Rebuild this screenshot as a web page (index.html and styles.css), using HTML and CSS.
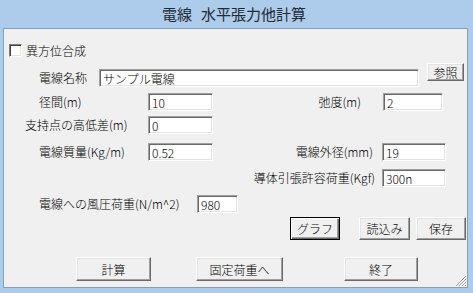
FILE: index.html
```html
<!DOCTYPE html>
<html lang="ja">

<head>
  <meta charset="UTF-8">
  <title>電線 水平張力他計算</title>
  <link rel="stylesheet" href="styles.css">
</head>

<body>
  <div class="window">
    <div class="titlebar"><span>電線</span><span class="title-main">水平張力他計算</span></div>

    <div class="panel">
      <div class="row row-check">
        <span class="check"></span>
        <span class="check-label">異方位合成</span>
      </div>

      <div class="row row-name">
        <span class="lbl lbl-name">電線名称</span>
        <input class="txt txt-name" type="text" value="サンプル電線">
        <button class="btn btn-ref">参照</button>
      </div>

      <div class="row row-span">
        <span class="lbl lbl-a">径間(m)</span>
        <input class="txt txt-a" type="text" value="10">
        <span class="lbl lbl-sag">弛度(m)</span>
        <input class="txt txt-sag" type="text" value="2">
      </div>

      <div class="row row-diff">
        <span class="lbl lbl-diff">支持点の高低差(m)</span>
        <input class="txt txt-a" type="text" value="0">
      </div>

      <div class="row row-mass">
        <span class="lbl lbl-a">電線質量(Kg/m)</span>
        <input class="txt txt-a" type="text" value="0.52">
        <span class="lbl lbl-dia">電線外径(mm)</span>
        <input class="txt txt-b" type="text" value="19">
      </div>

      <div class="row row-tension">
        <span class="lbl lbl-tension">導体引張許容荷重(Kgf)</span>
        <input class="txt txt-b" type="text" value="300n">
      </div>

      <div class="row row-wind">
        <span class="lbl lbl-wind">電線への風圧荷重(N/m^2)</span>
        <input class="txt txt-wind" type="text" value="980">
      </div>

      <div class="row row-btn1">
        <button class="btn btn-default btn-graph">グラフ</button>
        <button class="btn btn-load">読込み</button>
        <button class="btn btn-save">保存</button>
      </div>

      <div class="row row-btn2">
        <button class="btn btn-calc">計算</button>
        <button class="btn btn-fixed">固定荷重へ</button>
        <button class="btn btn-end">終了</button>
      </div>

      <svg class="grip" width="12" height="12" viewBox="0 0 12 12">
        <path d="M11 1 L1 11 M11 4 L4 11 M11 7 L7 11 M11 10 L10 11" stroke="#a0a0a0" stroke-width="1" />
        <path d="M11 2 L2 11 M11 5 L5 11 M11 8 L8 11" stroke="#fff" stroke-width="1" />
      </svg>
    </div>
  </div>
</body>

</html>
```

FILE: styles.css
```css
* {
  margin: 0;
  padding: 0;
  box-sizing: border-box;
}

body {
  background-color: #adcbea;
  font-family: "Noto Sans CJK JP", "Noto Sans", sans-serif;
  font-size: 12px;
  font-weight: 300;
  color: #000;
}

.window {
  width: 473px;
  height: 293px;
  background-color: #adcbea;
}

.titlebar {
  display: flex;
  justify-content: center;
  height: 28px;
  line-height: 28px;
  font-size: 15px;
  font-weight: 400;
  color: #1e2a36;
  padding-right: 5px;
}

.title-main {
  margin-left: 9px;
}

.panel {
  position: relative;
  width: 465px;
  height: 260px;
  margin-left: 3px;
  background-color: #f0f0f0;
  border: 1px solid #8a9db3;
}

.row {
  display: flex;
  align-items: center;
  height: 18px;
  white-space: nowrap;
}

.lbl {
  line-height: 18px;
}

/* 行の縦位置 */
.row-check {
  height: 13px;
  margin-top: 15px;
}

.row-name {
  margin-top: 12px;
  align-items: flex-start;
}

.row-span {
  margin-top: 6px;
}

.row-diff {
  margin-top: 5px;
}

.row-mass {
  margin-top: 9px;
}

.row-tension {
  margin-top: 8px;
}

.row-wind {
  margin-top: 8px;
}

.row-btn1 {
  height: 23px;
  margin-top: 4px;
}

.row-btn2 {
  height: 24px;
  margin-top: 17px;
}

/* チェックボックス */
.check {
  width: 13px;
  height: 13px;
  margin-left: 5px;
  background-color: #fff;
  border: 1px solid;
  border-color: #808080 #fff #fff #808080;
  box-shadow: inset 1px 1px #404040, inset -1px -1px #e3e3e3;
}

.check-label {
  margin-left: 4px;
}

/* テキストボックス */
.txt {
  height: 18px;
  font-family: "Noto Sans CJK JP", "Noto Sans", sans-serif;
  font-size: 12px;
  font-weight: 300;
  color: #000;
  padding: 0 3px;
  background-color: #fff;
  border: 1px solid;
  border-color: #a0a0a0 #fff #fff #a0a0a0;
  box-shadow: inset 1px 1px #696969, inset -1px -1px #e3e3e3;
  outline: none;
}

.lbl-name {
  width: 60px;
  margin-left: 35px;
}

.txt-name {
  width: 320px;
}

.btn-ref {
  width: 37px;
  height: 25px;
  margin-left: 8px;
  margin-top: -6px;
}

.lbl-a {
  width: 109px;
  margin-left: 35px;
}

.txt-a {
  width: 65px;
}

.lbl-sag {
  width: 170px;
  text-align: right;
  padding-right: 22px;
}

.txt-sag {
  width: 60px;
}

.lbl-diff {
  width: 123px;
  margin-left: 21px;
}

.lbl-dia {
  width: 169px;
  text-align: right;
  padding-right: 9px;
}

.txt-b {
  width: 64px;
}

.lbl-tension {
  width: 132px;
  margin-left: 246px;
  padding-right: 7px;
  text-align: right;
}

.lbl-wind {
  width: 158px;
  margin-left: 35px;
}

.txt-wind {
  width: 41px;
}

/* ボタン */
.btn {
  height: 100%;
  font-family: "Noto Sans CJK JP", "Noto Sans", sans-serif;
  font-size: 12px;
  font-weight: 300;
  color: #000;
  background-color: #f0f0f0;
  border: 1px solid;
  border-color: #fff #696969 #696969 #fff;
  box-shadow: inset -1px -1px #a0a0a0, inset 1px 1px #e3e3e3;
}

.btn-default {
  border-color: #000;
  box-shadow: inset 1px 1px #fff, inset -1px -1px #696969, inset -2px -2px #a0a0a0;
}

.btn-graph {
  width: 50px;
  margin-left: 286px;
}

.btn-load {
  width: 51px;
  margin-left: 19px;
}

.btn-save {
  width: 50px;
  margin-left: 6px;
}

.btn-calc {
  width: 75px;
  margin-left: 72px;
}

.btn-fixed {
  width: 87px;
  margin-left: 45px;
}

.btn-end {
  width: 74px;
  margin-left: 61px;
}

.grip {
  position: absolute;
  right: 0;
  bottom: 0;
}
```
